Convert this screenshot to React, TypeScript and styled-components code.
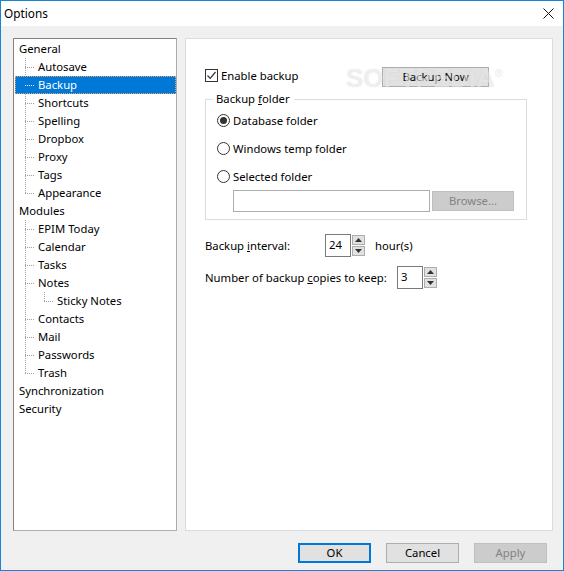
import React from "react";
import styled, { createGlobalStyle, css } from "styled-components";

const GlobalStyle = createGlobalStyle`
  html, body {
    margin: 0;
    padding: 0;
    background: #ffffff;
  }
  * {
    box-sizing: border-box;
  }
`;

const uiFont = css`
  font-family: "Noto Sans", "Open Sans", sans-serif;
  font-size: 11.3px;
  color: #000000;
`;

const Window = styled.div`
  ${uiFont};
  width: 564px;
  height: 571px;
  border: 1px solid #1883d7;
  display: flex;
  flex-direction: column;
  background: #f0f0f0;
  position: relative;
`;

const TitleBar = styled.div`
  height: 25px;
  background: #ffffff;
  display: flex;
  align-items: center;
  justify-content: space-between;
  padding: 0 9px 1px 3px;
`;

const Title = styled.span`
  font-size: 11.8px;
`;

const Body = styled.div`
  flex: 1;
  display: flex;
  flex-direction: column;
  padding: 12px 11px 7px 12px;
`;

const Panels = styled.div`
  flex: 1;
  display: flex;
  gap: 8px;
`;

const Tree = styled.div`
  width: 165px;
  background: #ffffff;
  border: 1px solid #828282;
  border-right-color: #adadad;
  border-bottom-color: #adadad;
  padding: 1px 0 0 1px;
`;

const TreeRow = styled.div<{ $level: number; $selected?: boolean }>`
  position: relative;
  height: 18px;
  line-height: 18px;
  width: 161px;
  padding-left: ${(p) => (p.$level === 0 ? 4 : p.$level === 1 ? 23 : 42)}px;
  white-space: nowrap;
  ${(p) =>
    p.$selected &&
    css`
      background: #0078d7;
      color: #ffffff;
      outline: 1px dotted #f0a060;
      outline-offset: -1px;
    `}
  ${(p) =>
    p.$level > 0 &&
    css`
      &::before {
        content: "";
        position: absolute;
        left: ${p.$level === 1 ? 10 : 29}px;
        width: 9px;
        top: 9px;
        border-top: 1px dotted ${p.$selected ? "#ffffff" : "#a0a0a0"};
      }
    `}
`;

const TreeGroup = styled.div<{ $level: number }>`
  position: relative;
  &::before {
    content: "";
    position: absolute;
    left: ${(p) => (p.$level === 1 ? 10 : 29)}px;
    top: 0;
    bottom: 9px;
    border-left: 1px dotted #a0a0a0;
  }
`;

const Page = styled.div`
  flex: 1;
  background: #ffffff;
  border: 1px solid #dcdcdc;
  padding: 28px 25px 0 19px;
  position: relative;
`;

const TopRow = styled.div`
  display: flex;
  align-items: center;
  height: 20px;
`;

const CheckRow = styled.label`
  display: flex;
  align-items: center;
  gap: 3px;
  width: 177px;
  margin-bottom: 4px;
`;

const CheckBox = styled.span`
  width: 13px;
  height: 13px;
  border: 1px solid #333333;
  background: #ffffff;
  display: inline-flex;
  align-items: center;
  justify-content: center;
`;

const Button = styled.button<{ $disabled?: boolean; $default?: boolean; $w?: number }>`
  ${uiFont};
  width: ${(p) => p.$w ?? 73}px;
  height: 20px;
  padding: 0;
  background: #e1e1e1;
  border: 1px solid #adadad;
  line-height: 16px;
  ${(p) =>
    p.$default &&
    css`
      border: 2px solid #0078d7;
    `}
  ${(p) =>
    p.$disabled &&
    css`
      background: #cccccc;
      border-color: #bfbfbf;
      color: #838383;
    `}
`;

const Group = styled.fieldset`
  margin: 5px 0 0 0;
  width: 322px;
  height: 128px;
  border: 1px solid #dcdcdc;
  padding: 0 0 0 11px;
  position: relative;
`;

const Legend = styled.legend`
  padding: 0 4px 0 3px;
  margin-left: -4px;
  line-height: 14px;
`;

const U = styled.span`
  text-decoration: underline;
`;

const RadioRow = styled.div`
  display: flex;
  align-items: center;
  gap: 3px;
  height: 20px;
  margin-top: 8px;
  &:first-of-type {
    margin-top: 4px;
  }
`;

const Radio = styled.span<{ $on?: boolean }>`
  width: 13px;
  height: 13px;
  border-radius: 50%;
  border: 1px solid #333333;
  background: #ffffff;
  display: inline-flex;
  align-items: center;
  justify-content: center;
  &::after {
    content: "";
    width: 7px;
    height: 7px;
    border-radius: 50%;
    background: ${(p) => (p.$on ? "#333333" : "transparent")};
  }
`;

const FolderRow = styled.div`
  display: flex;
  align-items: center;
  gap: 2px;
  margin: 4px 0 0 16px;
`;

const TextInput = styled.div`
  width: 197px;
  height: 22px;
  border: 1px solid #adadad;
  background: #ffffff;
`;

const FieldRow = styled.div<{ $top: number }>`
  display: flex;
  align-items: center;
  margin-top: ${(p) => p.$top}px;
`;

const FieldLabel = styled.span<{ $w: number }>`
  width: ${(p) => p.$w}px;
  white-space: nowrap;
`;

const SpinBox = styled.div`
  width: 26px;
  height: 23px;
  border: 1px solid #7a7a7a;
  background: #ffffff;
  padding: 2px 0 0 3px;
  line-height: 16px;
`;

const SpinButtons = styled.div`
  display: flex;
  flex-direction: column;
  margin-left: 1px;
  gap: 1px;
`;

const SpinBtn = styled.span`
  width: 13px;
  height: 10px;
  background: #e1e1e1;
  border: 1px solid #adadad;
  display: flex;
  align-items: center;
  justify-content: center;
`;

const Unit = styled.span`
  margin-left: 10px;
`;

const ButtonRow = styled.div`
  display: flex;
  justify-content: flex-end;
  gap: 15px;
  margin-top: 12px;
  padding-right: 5px;
`;

const Watermark = styled.div`
  position: absolute;
  left: 160px;
  top: 24px;
  font-family: "Liberation Sans", sans-serif;
  font-weight: 700;
  font-size: 26px;
  color: rgba(255, 255, 255, 0.5);
  text-shadow: 0 0 1px rgba(120, 120, 120, 0.25);
  pointer-events: none;
`;

const Reg = styled.sup`
  font-size: 11px;
  font-weight: 400;
`;

const Arrow = ({ up }: { up?: boolean }) => (
  <svg width="7" height="4" viewBox="0 0 7 4">
    <path d={up ? "M0 4 L3.5 0 L7 4 Z" : "M0 0 L3.5 4 L7 0 Z"} fill="#333" />
  </svg>
);

const Spinner = ({ value }: { value: string }) => (
  <>
    <SpinBox>{value}</SpinBox>
    <SpinButtons>
      <SpinBtn>
        <Arrow up />
      </SpinBtn>
      <SpinBtn>
        <Arrow />
      </SpinBtn>
    </SpinButtons>
  </>
);

const generalItems = ["Autosave", "Backup", "Shortcuts", "Spelling", "Dropbox", "Proxy", "Tags", "Appearance"];

export default function App() {
  return (
    <>
      <GlobalStyle />
      <Window>
        <TitleBar>
          <Title>Options</Title>
          <svg width="11" height="11" viewBox="0 0 11 11">
            <path d="M0.5 0.5 L10.5 10.5 M10.5 0.5 L0.5 10.5" stroke="#111" strokeWidth="1" />
          </svg>
        </TitleBar>
        <Body>
          <Panels>
            <Tree>
              <TreeRow $level={0}>General</TreeRow>
              <TreeGroup $level={1}>
                {generalItems.map((t) => (
                  <TreeRow key={t} $level={1} $selected={t === "Backup"}>
                    {t}
                  </TreeRow>
                ))}
              </TreeGroup>
              <TreeRow $level={0}>Modules</TreeRow>
              <TreeGroup $level={1}>
                <TreeRow $level={1}>EPIM Today</TreeRow>
                <TreeRow $level={1}>Calendar</TreeRow>
                <TreeRow $level={1}>Tasks</TreeRow>
                <TreeRow $level={1}>Notes</TreeRow>
                <TreeGroup $level={2}>
                  <TreeRow $level={2}>Sticky Notes</TreeRow>
                </TreeGroup>
                <TreeRow $level={1}>Contacts</TreeRow>
                <TreeRow $level={1}>Mail</TreeRow>
                <TreeRow $level={1}>Passwords</TreeRow>
                <TreeRow $level={1}>Trash</TreeRow>
              </TreeGroup>
              <TreeRow $level={0}>Synchronization</TreeRow>
              <TreeRow $level={0}>Security</TreeRow>
            </Tree>
            <Page>
              <TopRow>
                <CheckRow>
                  <CheckBox>
                    <svg width="11" height="11" viewBox="0 0 11 11">
                      <path d="M1.5 5.5 L4.2 8.3 L9.5 2" stroke="#333" strokeWidth="1.2" fill="none" />
                    </svg>
                  </CheckBox>
                  Enable backup
                </CheckRow>
                <Button $w={107}>Backup Now</Button>
              </TopRow>
              <Group>
                <Legend>
                  Backup <U>f</U>older
                </Legend>
                <RadioRow>
                  <Radio $on />
                  Database folder
                </RadioRow>
                <RadioRow>
                  <Radio />
                  Windows temp folder
                </RadioRow>
                <RadioRow>
                  <Radio />
                  Selected folder
                </RadioRow>
                <FolderRow>
                  <TextInput />
                  <Button $disabled $w={82}>
                    Browse...
                  </Button>
                </FolderRow>
              </Group>
              <FieldRow $top={14}>
                <FieldLabel $w={120}>
                  Backup <U>i</U>nterval:
                </FieldLabel>
                <Spinner value="24" />
                <Unit>hour(s)</Unit>
              </FieldRow>
              <FieldRow $top={9}>
                <FieldLabel $w={192}>
                  Number of backup <U>c</U>opies to keep:
                </FieldLabel>
                <Spinner value="3" />
              </FieldRow>
              <Watermark>
                SOFTPEDIA<Reg>®</Reg>
              </Watermark>
            </Page>
          </Panels>
          <ButtonRow>
            <Button $default>OK</Button>
            <Button>Cancel</Button>
            <Button $disabled>Apply</Button>
          </ButtonRow>
        </Body>
      </Window>
    </>
  );
}
